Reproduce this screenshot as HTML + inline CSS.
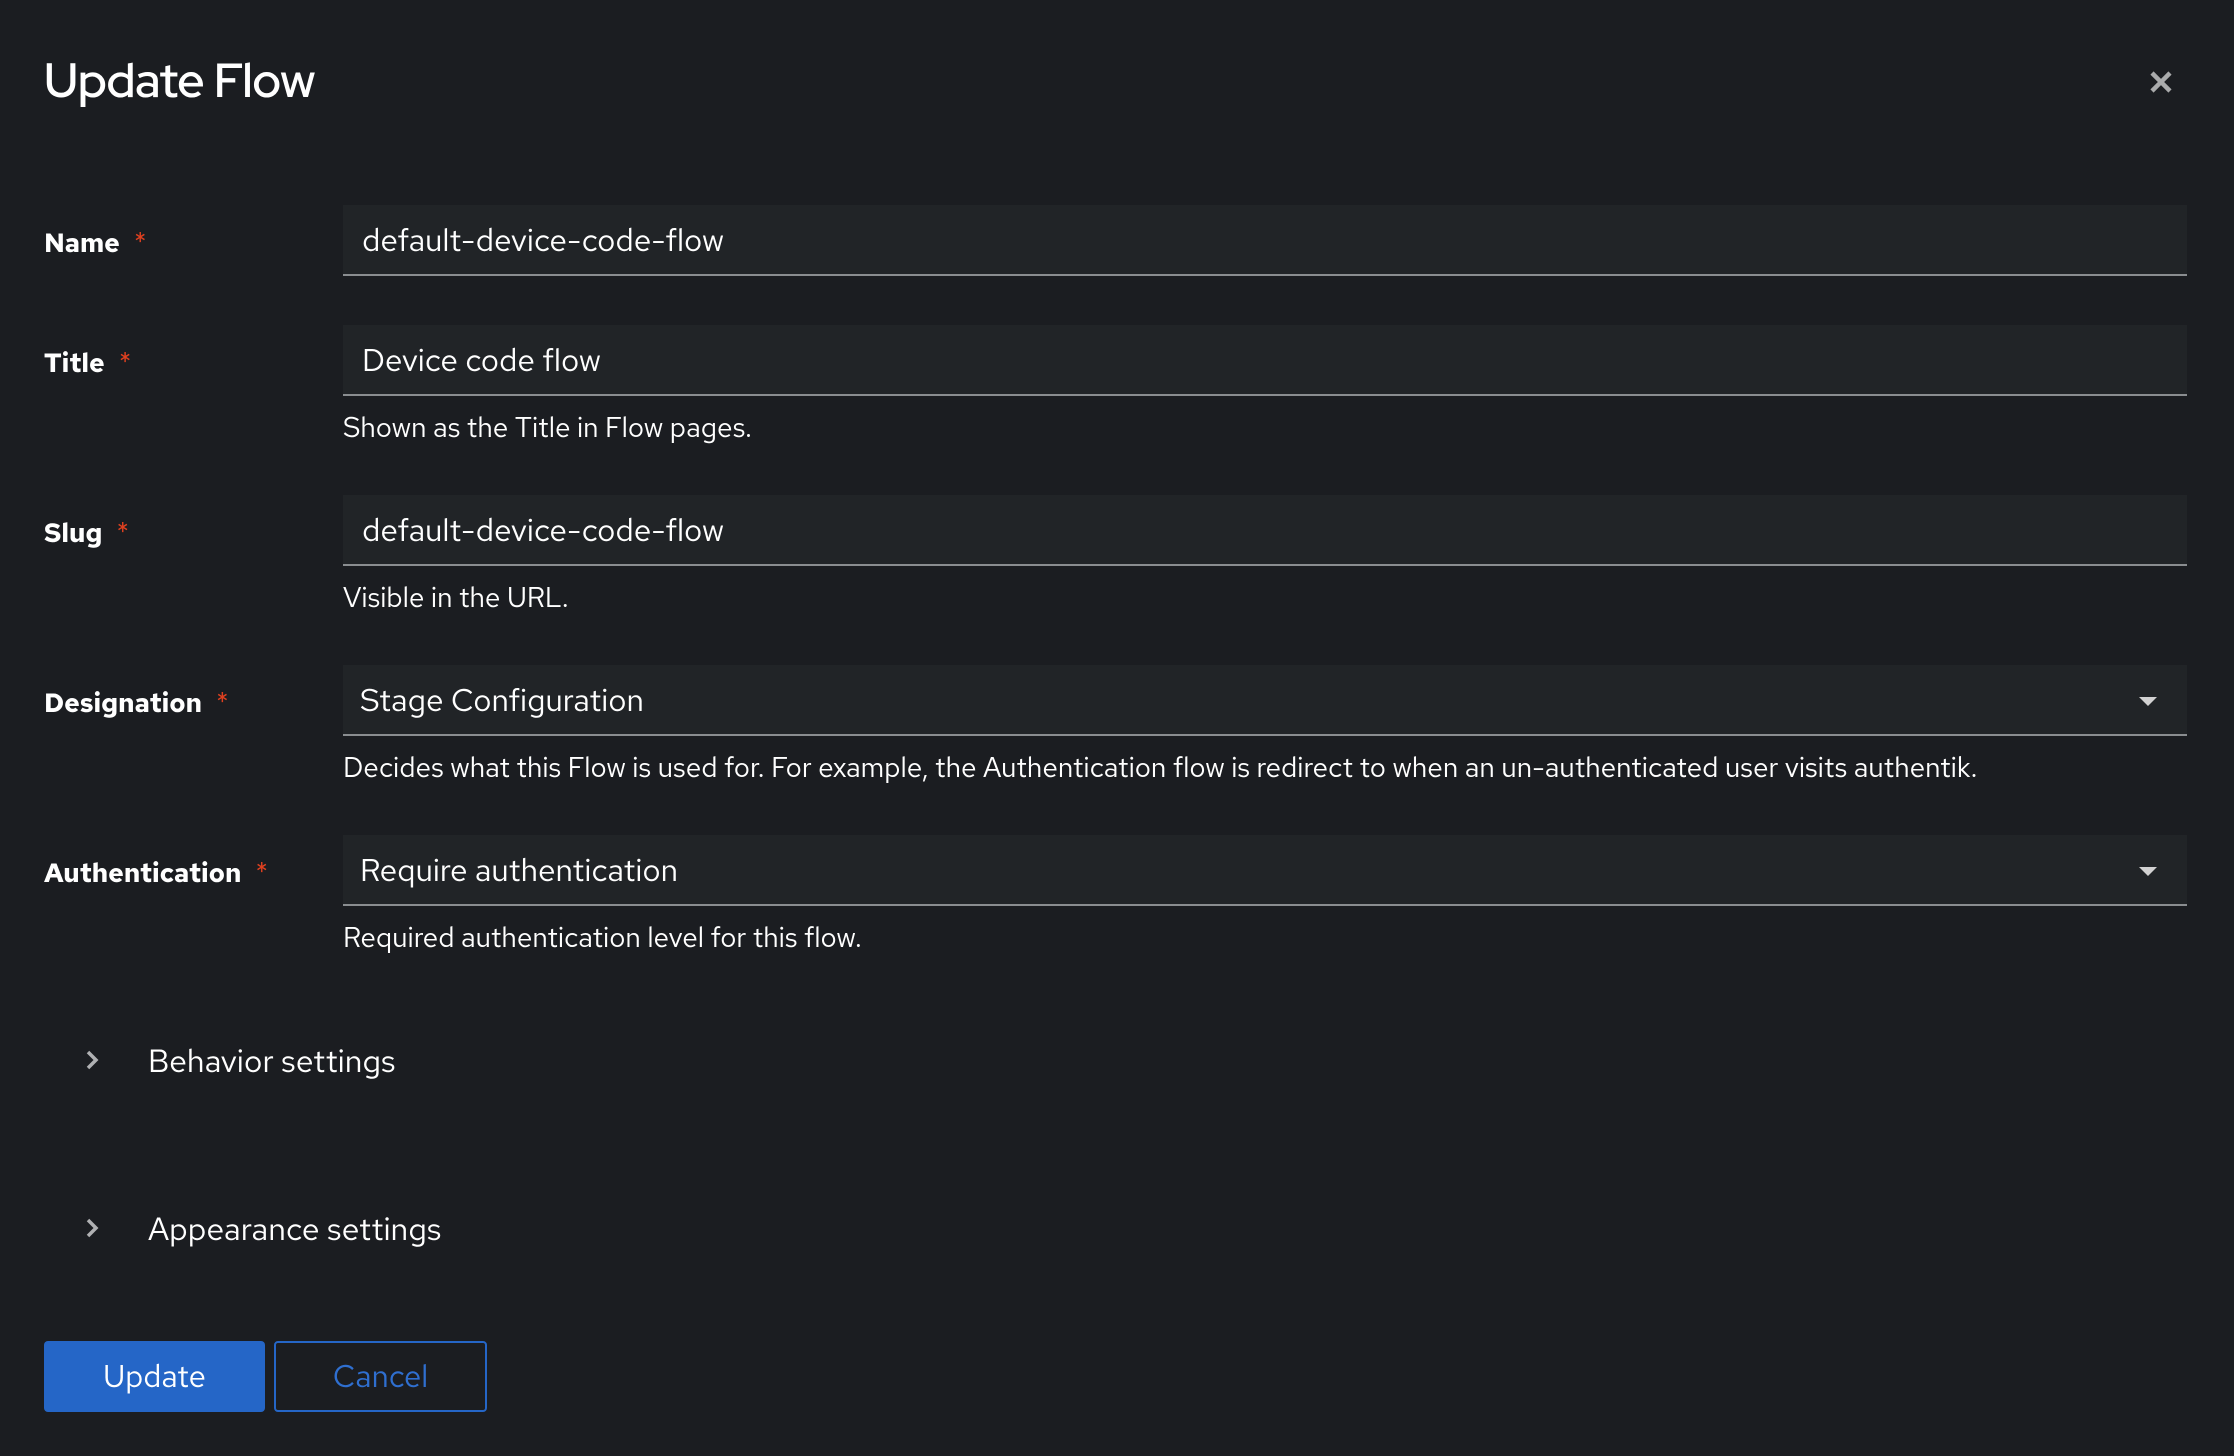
<!DOCTYPE html>
<html><head><meta charset="utf-8"><style>
*{margin:0;padding:0;box-sizing:border-box}
body{width:2234px;height:1456px;background:#1b1d21;color:#fff;font-family:"Red Hat Text","Liberation Sans",sans-serif;position:relative;overflow:hidden}
.a{position:absolute;white-space:nowrap}
h1{position:absolute;left:44px;top:48px;font-size:48px;font-weight:600;letter-spacing:-0.5px;font-family:"Red Hat Display","Red Hat Text","Liberation Sans",sans-serif}
.lbl{font-size:26.5px;font-weight:700}
.lbl span{color:#e0401f;font-weight:400;margin-left:14px;font-size:28px}
.inp{position:absolute;left:343px;width:1844px;height:71px;background:#212427;border-bottom:2px solid #8a8d90;font-size:31.5px;padding-left:19px;line-height:70px}
.help{font-size:27.9px}
.caret{position:absolute;right:30px;top:32px;width:0;height:0;border-left:9px solid transparent;border-right:9px solid transparent;border-top:9px solid #d2d2d2}
.sec{font-size:32px}
.btn{position:absolute;top:1341px;height:71px;font-size:31px;line-height:71px;text-align:center;border-radius:4px}
</style></head><body>
<h1>Update Flow</h1>
<svg class="a" style="left:2149px;top:70px" width="24" height="24" viewBox="0 0 24 24"><path d="M3 3L21 21M21 3L3 21" stroke="#aaabac" stroke-width="4.5"/></svg>

<div class="a lbl" style="left:44px;top:223px">Name<span>*</span></div>
<div class="inp" style="top:205px">default-device-code-flow</div>

<div class="a lbl" style="left:44px;top:343px">Title<span>*</span></div>
<div class="inp" style="top:325px">Device code flow</div>
<div class="a help" style="left:343px;top:409px">Shown as the Title in Flow pages.</div>

<div class="a lbl" style="left:44px;top:513px">Slug<span>*</span></div>
<div class="inp" style="top:495px">default-device-code-flow</div>
<div class="a help" style="left:343px;top:579px">Visible in the URL.</div>

<div class="a lbl" style="left:44px;top:683px">Designation<span>*</span></div>
<div class="inp" style="top:665px;padding-left:17px">Stage Configuration<div class="caret"></div></div>
<div class="a help" style="left:343px;top:749px">Decides what this Flow is used for. For example, the Authentication flow is redirect to when an un-authenticated user visits authentik.</div>

<div class="a lbl" style="left:44px;top:853px">Authentication<span>*</span></div>
<div class="inp" style="top:835px;padding-left:17px">Require authentication<div class="caret"></div></div>
<div class="a help" style="left:343px;top:919px">Required authentication level for this flow.</div>

<svg class="a" style="left:84px;top:1049px" width="16" height="22" viewBox="0 0 16 22"><path d="M4 3L12 11L4 19" stroke="#b0b1b3" stroke-width="3.5" fill="none"/></svg>
<div class="a sec" style="left:148px;top:1039px">Behavior settings</div>
<svg class="a" style="left:84px;top:1217px" width="16" height="22" viewBox="0 0 16 22"><path d="M4 3L12 11L4 19" stroke="#b0b1b3" stroke-width="3.5" fill="none"/></svg>
<div class="a sec" style="left:148px;top:1207px">Appearance settings</div>

<div class="btn" style="left:44px;width:221px;background:#2566c7;color:#fff">Update</div>
<div class="btn" style="left:274px;width:213px;border:2px solid #2566c7;color:#2f6fd0;line-height:67px">Cancel</div>
</body></html>
